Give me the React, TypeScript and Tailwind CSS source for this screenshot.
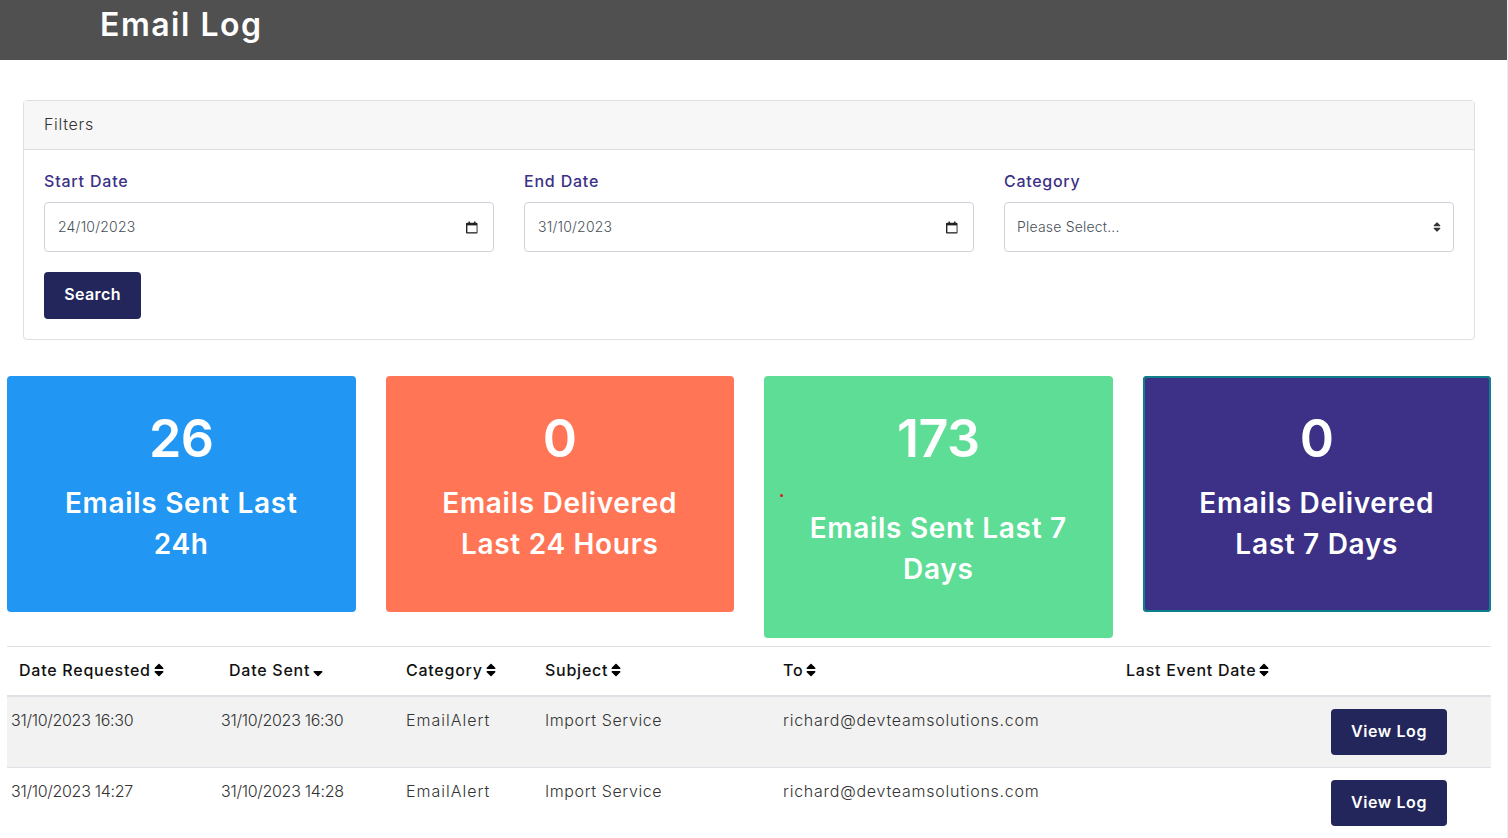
import { FaSort, FaSortDown } from 'react-icons/fa';

const stats = [
  { value: '26', label: 'Emails Sent Last 24h', color: 'bg-[#2196f3]' },
  { value: '0', label: 'Emails Delivered Last 24 Hours', color: 'bg-[#ff7555]' },
  { value: '173', label: 'Emails Sent Last 7 Days', color: 'bg-[#5ddd96]', dot: true },
  { value: '0', label: 'Emails Delivered Last 7 Days', color: 'bg-[#3c3186] shadow-[inset_0_0_0_2px_#0f7f8c]' },
];

const columns = [
  { title: 'Date Requested', className: 'pl-3' },
  { title: 'Date Sent', className: 'pl-3', sorted: true },
  { title: 'Category', className: 'pl-1' },
  { title: 'Subject', className: 'pl-1' },
  { title: 'To', className: 'pl-1' },
  { title: 'Last Event Date', className: 'pl-1' },
];

const rows = [
  { requested: '31/10/2023 16:30', sent: '31/10/2023 16:30' },
  { requested: '31/10/2023 14:27', sent: '31/10/2023 14:28' },
];

function CalendarIcon() {
  return (
    <svg width="12" height="13" viewBox="0 0 12 13" className="text-[#222]">
      <path d="M2.5 0.5h1.5v1.2h4V0.5h1.5v1.2h1a1 1 0 0 1 1 1v8.8a1 1 0 0 1-1 1H1a1 1 0 0 1-1-1V2.7a1 1 0 0 1 1-1h1.5z" fill="currentColor" />
      <rect x="1.4" y="4.4" width="9.2" height="6.8" fill="#fff" />
    </svg>
  );
}

function DateField({ label, value }: { label: string; value: string }) {
  return (
    <div>
      <div className="mb-[9px] text-[16px] leading-6 font-medium text-[#3c3186] tracking-[0.8px]">{label}</div>
      <div className="flex h-[50px] items-center justify-between rounded border border-[#ced4da] bg-white pl-[13px] pr-[15px] text-[14px] font-light text-[#495057] tracking-[0.2px]">
        <span className="-mt-[2px]">{value}</span>
        <CalendarIcon />
      </div>
    </div>
  );
}

export default function App() {
  return (
    <div className="h-[838px] overflow-hidden border-r border-[#eeeeee] bg-white font-['Inter','Liberation_Sans',sans-serif] text-[#212529]">
      <header className="h-[60px] bg-[#505050] pl-[100px] text-[32px] leading-[50px] font-semibold text-white tracking-[1.5px]">
        Email Log
      </header>

      <section className="mx-[23px] mt-10 w-[1452px] rounded border border-[#dfdfdf]">
        <div className="h-[49px] border-b border-[#dfdfdf] bg-[#f7f7f7] pl-5 text-[16px] leading-[47px] font-light text-[#333] tracking-[0.7px]">
          Filters
        </div>
        <div className="px-5 pt-[19px] pb-5">
          <div className="grid grid-cols-3 gap-[30px]">
            <DateField label="Start Date" value="24/10/2023" />
            <DateField label="End Date" value="31/10/2023" />
            <div>
              <div className="mb-[9px] text-[16px] leading-6 font-medium text-[#3c3186] tracking-[0.7px]">Category</div>
              <div className="flex h-[50px] items-center justify-between rounded border border-[#ced4da] bg-white pl-3 pr-[10px] text-[14px] font-light text-[#495057] tracking-[0.2px]">
                <span className="-mt-[2px]">Please Select...</span>
                <FaSort className="text-[12px] text-[#333]" />
              </div>
            </div>
          </div>
          <button className="mt-5 block h-[47px] w-[97px] rounded bg-[#23265a] pb-1 text-[16px] font-semibold tracking-[0.4px] text-white">
            Search
          </button>
        </div>
      </section>

      <section className="mx-[7px] mt-9 grid w-[1484px] grid-cols-4 items-start gap-[30px]">
        {stats.map((stat) => (
          <div key={stat.label} className={`relative rounded px-[30px] pt-8 text-center text-white ${stat.color} ${stat.dot ? 'h-[262px]' : 'h-[236px]'}`}>
            <div className="text-[52px] leading-[62px] font-semibold tracking-[-0.5px]">{stat.value}</div>
            {stat.dot && <span className="absolute top-[118px] left-4 h-[3px] w-[3px] rounded-full bg-[#e01b1b]" />}
            <div className={`${stat.dot ? 'mt-[38px]' : 'mt-[13px]'} text-[28px] leading-[41px] font-semibold tracking-[0.7px]`}>{stat.label}</div>
          </div>
        ))}
      </section>

      <table className="mx-[7px] mt-2 w-[1484px] table-fixed border-collapse border-t border-[#dee2e6] text-[16px]">
        <colgroup>
          <col className="w-[210px]" />
          <col className="w-[185px]" />
          <col className="w-[139px]" />
          <col className="w-[238px]" />
          <col className="w-[343px]" />
          <col className="w-[205px]" />
          <col className="w-[164px]" />
        </colgroup>
        <thead>
          <tr className="h-[49px] border-b-2 border-[#dee2e6]">
            {columns.map((col) => (
              <th key={col.title} className={`${col.className} pb-[2px] text-left font-medium text-[#111] tracking-[0.75px]`}>
                <span className="inline-flex items-center">
                  {col.title}
                  {col.sorted ? <FaSortDown className="text-[16px] text-black" /> : <FaSort className="text-[16px] text-black" />}
                </span>
              </th>
            ))}
            <th />
          </tr>
        </thead>
        <tbody className="font-light text-[#333]">
          {rows.map((row, index) => (
            <tr key={row.requested} className={`h-[72px] border-b border-[#dee2e6] align-top ${index === 0 ? 'bg-[#f2f2f2]' : ''}`}>
              <td className="pt-[11px] pl-1 tracking-[-0.3px]">{row.requested}</td>
              <td className="pt-[11px] pl-1 tracking-[-0.3px]">{row.sent}</td>
              <td className="pt-[11px] pl-1 tracking-[1px]">EmailAlert</td>
              <td className="pt-[11px] pl-1 tracking-[0.6px]">Import Service</td>
              <td className="pt-[11px] pl-1 tracking-[0.75px]">richard@devteamsolutions.com</td>
              <td />
              <td className="pt-3 pl-1">
                <button className="h-[46px] w-[116px] rounded bg-[#23265a] pb-[2px] text-[16px] font-semibold tracking-[0.6px] text-white">
                  View Log
                </button>
              </td>
            </tr>
          ))}
        </tbody>
      </table>
    </div>
  );
}
